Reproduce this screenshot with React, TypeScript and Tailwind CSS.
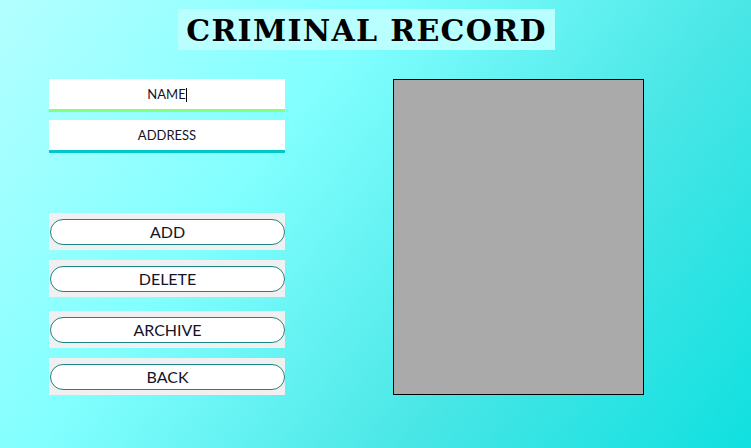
export default function App() {
  const buttons = [
    { label: 'ADD', mt: 'mt-[60px]' },
    { label: 'DELETE', mt: 'mt-[10px]' },
    { label: 'ARCHIVE', mt: 'mt-[14px]' },
    { label: 'BACK', mt: 'mt-[10px]' },
  ]

  return (
    <div className="w-[751px] h-[448px] overflow-hidden bg-[linear-gradient(128deg,#b4ffff_0%,#82ffff_35%,#4ae6e6_68%,#10e0e0_100%)] font-['Lato',sans-serif]">
      {/* Title */}
      <div className="pt-[9px] pl-[178px]">
        <div className="w-[377px] h-[41px] bg-[#b9ffff] flex items-center justify-center pt-[3px]">
          <h1 className="font-['DejaVu_Serif',serif] font-bold text-[30px] leading-none tracking-[1.3px] text-black">
            CRIMINAL RECORD
          </h1>
        </div>
      </div>

      <div className="flex mt-[29px] ml-[49px] gap-[108px]">
        {/* Form column */}
        <div className="w-[236px] flex flex-col">
          <div className="h-[33px] bg-white border-b-[3px] border-[#80ff80] flex items-center justify-center pt-px text-[13px] text-[#141428]">
            <span>NAME</span>
            <span className="inline-block w-px h-[14px] bg-black" />
          </div>
          <div className="mt-[8px] h-[33px] bg-white border-b-[3px] border-[#00c8c8] flex items-center justify-center pt-px text-[13px] text-[#141428]">
            ADDRESS
          </div>

          {buttons.map((b) => (
            <div key={b.label} className={`${b.mt} h-[37px] bg-[#f0f0f0] pt-[6px] pl-px`}>
              <button className="w-[235px] h-[26px] rounded-full bg-white border border-[#1a8585] text-[16px] text-[#141428] flex items-center justify-center">
                {b.label}
              </button>
            </div>
          ))}
        </div>

        {/* Photo */}
        <div className="w-[251px] h-[316px] bg-[#aaaaaa] border border-black" />
      </div>
    </div>
  )
}
